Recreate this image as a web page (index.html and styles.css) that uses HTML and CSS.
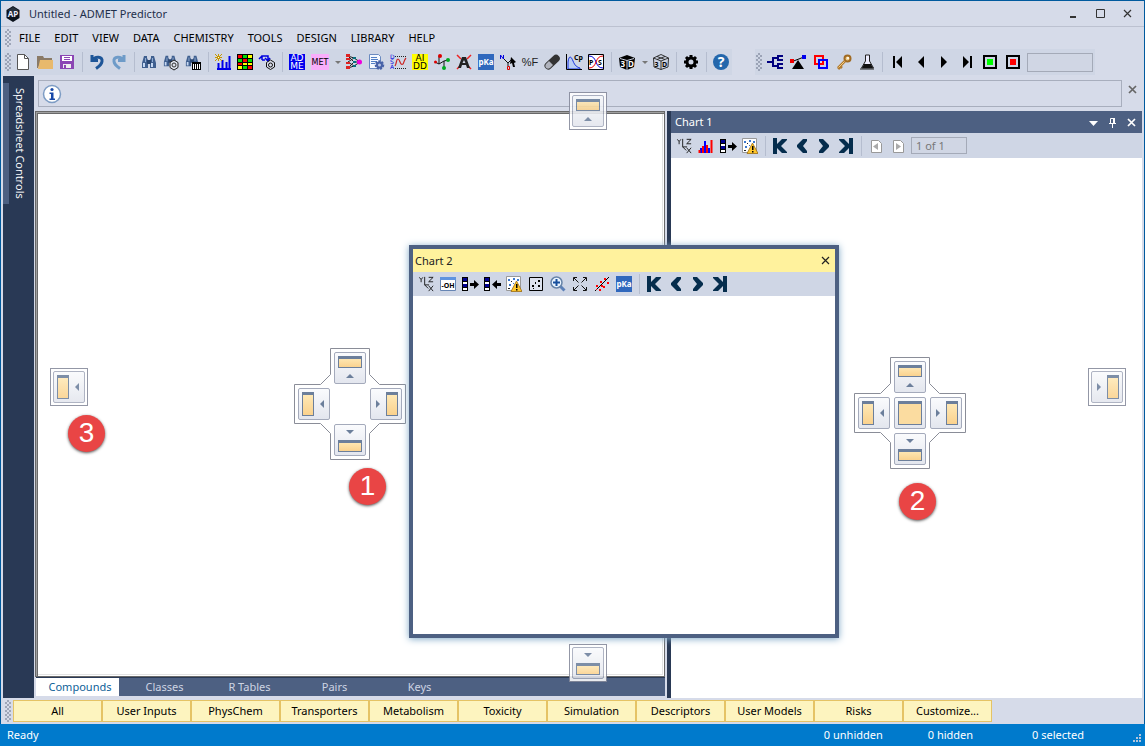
FILE: index.html
```html
<!DOCTYPE html>
<html lang="en">
<head>
<meta charset="utf-8">
<title>Untitled - ADMET Predictor</title>
<link rel="stylesheet" href="styles.css">
</head>
<body>
<svg class="sprites" aria-hidden="true">
  <linearGradient id="amber" x1="0" y1="0" x2="0" y2="1"><stop offset="0" stop-color="#ffeab8"/><stop offset="1" stop-color="#fad18c"/></linearGradient>
  <symbol id="dock-top" viewBox="0 0 32 32"><rect x="4.500" y="5.500" width="23" height="10" fill="url(#amber)" stroke="#6c7f9b"/><path d="M4 4h24v3H4z" fill="#6c7f9b"/><path d="M12 26l4-4 4 4z" fill="#6c7f9b"/></symbol>
  <symbol id="dock-bottom" viewBox="0 0 32 32"><rect x="4.500" y="17.500" width="23" height="10" fill="url(#amber)" stroke="#6c7f9b"/><path d="M4 16h24v3H4z" fill="#6c7f9b"/><path d="M12 6l4 4 4-4z" fill="#6c7f9b"/></symbol>
  <symbol id="dock-left" viewBox="0 0 32 32"><rect x="4.500" y="5.500" width="11" height="22" fill="url(#amber)" stroke="#6c7f9b"/><path d="M4 4h12v3H4z" fill="#6c7f9b"/><path d="M26 12l-4 4 4 4z" fill="#6c7f9b"/></symbol>
  <symbol id="dock-right" viewBox="0 0 32 32"><rect x="16.500" y="5.500" width="11" height="22" fill="url(#amber)" stroke="#6c7f9b"/><path d="M16 4h12v3H16z" fill="#6c7f9b"/><path d="M6 12l4 4-4 4z" fill="#6c7f9b"/></symbol>
  <symbol id="dock-center" viewBox="0 0 32 32"><rect x="4.500" y="5.500" width="23" height="22" fill="#fbdca0" stroke="#6c7f9b"/><path d="M4 4h24v3H4z" fill="#6c7f9b"/></symbol>
  <symbol id="dock-frame" viewBox="0 0 112 112"><path d="M36.500.5h39v26l10 10h26v39h-26l-10 10v26h-39v-26l-10-10h-26v-39h26l10-10z" fill="#fff" stroke="#8a8d98"/></symbol>
  <symbol id="binoculars" viewBox="0 0 16 16"><path d="M3 2h3v2l1 2v8H1V9zM10 2h3l2 7v5H9V6l1-2z" fill="#3f5f8f"/><path d="M6 6h4v4H6z" fill="#29456f"/><path d="M2 9h2v4H2zM10 9h2v4h-2z" fill="#c5d8f3"/><path d="M4 4h1v4H4zM11 4h1v4h-1z" fill="#8fabd2"/></symbol>
  <symbol id="xyz" viewBox="0 0 18 18"><path d="M1.500 1.500l2 2.500 2-2.500M3.500 4v3M7.500 1v9h5M7.500 10l4 4M12 1.500h5l-5 5h5M12 11l5 6M17 11l-5 6" fill="none" stroke="#111"/></symbol>
  <symbol id="strip-out" viewBox="0 0 18 16"><path d="M1 1h6v14H1z"/><path d="M2 2h4v3H2zM2 8h4v3H2z" fill="#000090"/><path d="M2 6h4v2H2zM2 12h4v2H2z" fill="#fff"/><path d="M9 7h4V4l5 4.500-5 4.500v-3H9z"/></symbol>
  <symbol id="strip-in" viewBox="0 0 18 16"><path d="M1 1h6v14H1z"/><path d="M2 2h4v3H2zM2 8h4v3H2z" fill="#000090"/><path d="M2 6h4v2H2zM2 12h4v2H2z" fill="#fff"/><path d="M18 7h-4V4L9 8.500l5 4.500v-3h4z"/></symbol>
  <symbol id="scatter-warn" viewBox="0 0 16 16"><path d="M.5.5h14v14H.5z" fill="#fff" stroke="#999"/><path d="M2 3h2v2H2zM7 2h2v2H7zM11 3h2v2h-2zM3 8h2v2H3zM7 7h1v1H7z" fill="#3b78cf"/><path d="M5 5h1v1H5zM2 12h2v1H2z" fill="#222"/><path d="M10.500 5L5 15.500h11z" fill="#ffc62a" stroke="#9b6c13" stroke-width=".8"/><path d="M10 8h1.500v4H10zM10 13h1.500v1.500H10z"/></symbol>
  <symbol id="pka" viewBox="0 0 16 16"><path d="M0 0h16v16H0z" fill="#3068bd"/><text x="8" y="11" text-anchor="middle" fill="#fff" font-size="8" font-weight="700">pKa</text></symbol>
  <symbol id="nav-first" viewBox="0 0 16 16"><path d="M1 0h4v6l5-5h5v1L9 8l6 6v1h-5l-5-5v6H1z"/></symbol>
  <symbol id="nav-last" viewBox="0 0 16 16"><path d="M15 0h-4v6L6 1H1v1l6 6-6 6v1h5l5-5v6h4z"/></symbol>
  <symbol id="nav-prev" viewBox="0 0 16 16"><path d="M9 1h4v2L9 8l4 5v2H9L3 9V7z"/></symbol>
  <symbol id="nav-next" viewBox="0 0 16 16"><path d="M7 1H3v2l4 5-4 5v2h4l6-6V7z"/></symbol>
</svg>
<div class="app">
  <header class="titlebar">
    <svg class="logo" viewBox="0 0 16 16" aria-hidden="true"><path d="M8 0l6.500 4v8L8 16l-6.500-4V4z" fill="#0b121c"/><path d="M8 1l5.500 3.300L8 8 2.500 4.300z" fill="#27313d"/><text x="8" y="11" text-anchor="middle" font-size="8" font-weight="700" fill="#eef">AP</text></svg>
    <h1 class="caption">Untitled - ADMET Predictor</h1>
    <button class="win" aria-label="Minimize"><svg viewBox="0 0 11 11"><path d="M2 8h6v2H2z"/></svg></button>
    <button class="win" aria-label="Maximize"><svg viewBox="0 0 11 11"><path d="M1.500 1.500h8v8h-8z" fill="none" stroke="currentColor"/></svg></button>
    <button class="win" aria-label="Close"><svg viewBox="0 0 11 11"><path d="M2 2l7 7M9 2l-7 7" fill="none" stroke="currentColor" stroke-width="1.200"/></svg></button>
  </header>
  <nav class="menubar" aria-label="Main menu">
    <span class="grip"></span>
    <button>FILE</button><button>EDIT</button><button>VIEW</button><button>DATA</button><button>CHEMISTRY</button><button>TOOLS</button><button>DESIGN</button><button>LIBRARY</button><button>HELP</button>
  </nav>
  <div class="toolbars">
    <div class="toolbar" role="toolbar" aria-label="Standard">
      <span class="grip"></span>
      <button class="tool" aria-label="New"><svg viewBox="0 0 16 16"><path d="M2.500.5h7l4 4v11h-11z" fill="#fff" stroke="#555"/><path d="M9.500.5v4h4" fill="none" stroke="#555"/></svg></button>
      <button class="tool" aria-label="Open"><svg viewBox="0 0 16 16"><path d="M0 2h6l1 2h8v3H4L1 14H0z" fill="#8a7a66"/><path d="M3 6h13v9H1z" fill="#e8b96c"/></svg></button>
      <button class="tool" aria-label="Save"><svg viewBox="0 0 16 16"><path d="M1 1h14v14H1z" fill="#8b46b4"/><path d="M3 2h10v5H3z" fill="#fff"/><path d="M5 3.500h6M5 5.500h6" stroke="#8b46b4"/><path d="M4 10h8v4H4z" fill="#eee"/><path d="M5 11h2v3H5z" fill="#8b46b4"/></svg></button>
      <span class="sep"></span>
      <button class="tool" aria-label="Undo"><svg viewBox="0 0 16 16"><path d="M3 1v5.500h6M3.500 6C6 2 14 2 13 7.500c-.5 3.500-3 5-6 7" fill="none" stroke="#1d5598" stroke-width="3"/></svg></button>
      <button class="tool" aria-label="Redo"><svg viewBox="0 0 16 16"><path d="M13 1v5.500H7M12.500 6C10 2 2 2 3 7.500c.5 3.500 3 5 6 7" fill="none" stroke="#6e9bc8" stroke-width="3"/></svg></button>
      <span class="sep"></span>
      <button class="tool" aria-label="Find"><svg><use href="#binoculars"/></svg></button>
      <button class="tool" aria-label="Find structure"><svg viewBox="0 0 16 16"><use href="#binoculars" width="14" height="14"/><path d="M11 6l4 2.500v5L11 16l-4-2.500v-5z" fill="#dde2ec" stroke="#222"/><circle cx="11" cy="11" r="2" fill="none" stroke="#333"/></svg></button>
      <button class="tool" aria-label="Find in table"><svg viewBox="0 0 16 16"><use href="#binoculars" width="14" height="14"/><path d="M7 8h9v8H7z"/><path d="M8.500 10v5M10.500 10v5M12.500 10v5M14.500 10v5" stroke="#fff"/></svg></button>
      <span class="sep"></span>
      <button class="tool" aria-label="New chart"><svg viewBox="0 0 16 16"><path d="M2 15h14M3.500 9v6M7.500 6v9M11.500 8v7M14.500 2v13" fill="none" stroke="#0000e8" stroke-width="2"/><path d="M0 0l7 7M7 0L0 7M3.500 0v7M0 3.500h7" stroke="#c89800"/><path d="M3 3h1v1H3z" fill="#fff"/></svg></button>
      <button class="tool" aria-label="Heat map"><svg viewBox="0 0 16 16"><path d="M0 0h16v16H0z"/><path d="M1 1h4v3H1zM6 5h4v3H6zM1 9h4v2H1zM11 12h4v3h-4z" fill="red"/><path d="M6 1h4v3H6zM1 5h4v3H1zM11 5h4v3h-4zM6 12h4v3H6z" fill="#0d0"/><path d="M11 1h4v3h-4zM6 9h4v2H6zM11 9h4v2h-4zM1 12h4v3H1z" fill="#ff0"/></svg></button>
      <button class="tool" aria-label="Convert structure"><svg viewBox="0 0 16 16"><path d="M3 6V2h6v4M0 5l3-3M6 4l3 3 2-3M3 6h3" fill="none" stroke="#0000e0" stroke-width="1.500"/><path d="M11.500 6l4 2.500v4.500l-4 2.500-4-2.500V8.500z" fill="#d8dcea" stroke="#111"/><circle cx="11.500" cy="11" r="2" fill="none" stroke="#111"/></svg></button>
      <span class="sep"></span>
      <button class="tool" aria-label="ADME"><svg viewBox="0 0 16 16"><path d="M0 0h16v16H0z" fill="#00e"/><g class="pixel" fill="#fff" font-size="9"><text x="8" y="7" text-anchor="middle">AD</text><text x="8" y="15" text-anchor="middle">ME</text></g></svg></button>
      <button class="tool tool-wide" aria-label="MET"><svg class="wide" viewBox="0 0 18 16"><path d="M0 0h18v16H0z" fill="#f9aefb"/><text class="pixel" x="9" y="11" text-anchor="middle" font-size="8">MET</text></svg></button>
      <button class="drop" aria-label="MET options"></button>
      <button class="tool" aria-label="Neural network"><svg viewBox="0 0 16 16"><path d="M2 2l6 2-6 4 6 4-6 2M2 2l6 6-6 6M8 4l6 4-6 4M8 8h6" fill="none" stroke="#222"/><path d="M0 0h4v3H0zM0 4h4v2H0zM0 8h4v2H0zM0 12h4v3H0z" fill="#d22"/><path d="M7 3h3v2H7zM7 7h3v2H7zM7 11h3v2H7z" fill="#087080"/><circle cx="13.500" cy="8" r="2.500" fill="#e0d"/></svg></button>
      <button class="tool" aria-label="Model settings"><svg viewBox="0 0 16 16"><path d="M1.500.5h9l2 2v12h-11z" fill="#f5f9ff" stroke="#6a8ac0"/><path d="M3 3.500h6M3 5.500h7M3 7.500h6M3 9.500h4" stroke="#527fc5"/><circle cx="11.500" cy="11" r="3.500" fill="#b9c6e5" stroke="#4762a8" stroke-width="2.500" stroke-dasharray="2 1"/><circle cx="11.500" cy="11" r="2.500" fill="none" stroke="#4762a8" stroke-width="2"/></svg></button>
      <button class="tool" aria-label="DSA"><svg viewBox="0 0 16 16"><g class="pixel" font-size="6" fill="#00d"><text x="0" y="5">D</text><text x="0" y="10">S</text><text x="0" y="15">A</text></g><path d="M5 12C7 9 6 5 8 5s2 7 5 5c1-1 1-4 3-6" fill="none" stroke="#c22" stroke-width="1.200"/><path d="M5 2.500h11M5 14.500h11" stroke="#222" stroke-dasharray="1 1"/></svg></button>
      <button class="tool" aria-label="AIDD"><svg viewBox="0 0 16 16"><path d="M0 0h16v16H0z" fill="#ff0"/><g class="pixel" font-size="9"><text x="8" y="7" text-anchor="middle">AI</text><text x="8" y="15" text-anchor="middle">DD</text></g></svg></button>
      <button class="tool" aria-label="Molecule"><svg viewBox="0 0 16 16"><path d="M1 8l4 2 5-3 4-1M5 2v8M10 7v7" fill="none" stroke="#111"/><circle cx="1.500" cy="8" r="1.500" fill="#d00"/><circle cx="6" cy="2" r="2" fill="#d00"/><circle cx="14" cy="6" r="2" fill="#0a2"/><circle cx="10" cy="14" r="2" fill="#0a2"/></svg></button>
      <button class="tool" aria-label="Atom model"><svg viewBox="0 0 16 16"><path d="M1 1l4 4M15 1l-4 4M1 15l3-3M15 15l-3-3" stroke="#e22" stroke-width="1.500"/><path d="M6 3h4l4 11h-3l-1-3H6l-1 3H2zM8 6L6.500 9h3z" fill="#222" fill-rule="evenodd"/></svg></button>
      <button class="tool" aria-label="pKa"><svg><use href="#pka"/></svg></button>
      <button class="tool" aria-label="Pick atom"><svg viewBox="0 0 16 16"><path d="M.5 5V1l3 4V1" fill="none" stroke="#00d"/><path d="M4 5l4 4 4-4M8 9v3" fill="none" stroke="#111"/><path d="M7.500 12.500h2v3h-2z" fill="none" stroke="#d00"/><path d="M11 3l5 5-2 1 1 4h-2l-1-4-2 1z"/></svg></button>
      <button class="tool percent">%F</button>
      <button class="tool" aria-label="Capsule"><svg viewBox="0 0 16 16"><rect x="-1" y="4.500" width="18" height="7.500" rx="3.700" transform="rotate(-43 8 8)" fill="#333"/><path d="M2 10l3-3 4 4-3 3c-3 2-6-1-4-4z" fill="#b0b3bd"/></svg></button>
      <button class="tool" aria-label="Cp plot"><svg viewBox="0 0 16 16"><path d="M2 15V8c1-7 3-6 5-1s4 6 7 7v1z" fill="#b9ccf3" stroke="#1732df"/><path d="M.5 0v15.500H16" fill="none" stroke="#000"/><text x="8" y="6" font-size="7" font-weight="700">Cp</text></svg></button>
      <button class="tool" aria-label="P/S plot"><svg viewBox="0 0 16 16"><path d="M.5.5h15v15H.5z" fill="#fff" stroke="#000"/><path d="M1 2c9 0 5 12 14 12" fill="none" stroke="#00d"/><path d="M1 14c9 0 5-12 14-12" fill="none" stroke="#e00"/><text x="1" y="11" font-size="7" font-weight="700">P</text><text x="10" y="11" font-size="7" font-weight="700">S</text></svg></button>
      <span class="sep"></span>
      <button class="tool tool-wide" aria-label="3D view"><svg viewBox="0 0 16 16"><path d="M0 4l8-3 8 3-1 9-7 3-7-3z"/><path d="M1 4.500l7 2 7-2M8 6.500V16" fill="none" stroke="#ccd3e2"/><text x="1.500" y="12.500" font-size="8" font-weight="700" fill="#fff">3</text><text x="9" y="12.500" font-size="8" font-weight="700" fill="#fff">D</text></svg></button>
      <button class="drop" aria-label="3D options"></button>
      <button class="tool" aria-label="3D wire view"><svg viewBox="0 0 16 16"><path d="M.5 4L8 .5 15.500 4 15 13l-7 2.500L1 13zM.5 4L8 7l7.500-3M8 7v8.500M4 2.500l8 3M12 2.500l-8 3" fill="#ccd3e2" stroke="#222" stroke-width=".9"/><text x="1.500" y="12.500" font-size="7" font-weight="700">3</text><text x="9" y="12.500" font-size="7" font-weight="700">D</text></svg></button>
      <span class="sep"></span>
      <button class="tool" aria-label="Settings"><svg viewBox="0 0 16 16"><circle cx="8" cy="8" r="4" fill="none" stroke="#000" stroke-width="3"/><path d="M8 1v3M8 12v3M1 8h3M12 8h3M3 3l2 2M11 11l2 2M13 3l-2 2M5 11l-2 2" stroke="#000" stroke-width="3"/></svg></button>
      <span class="sep"></span>
      <button class="tool" aria-label="Help"><svg viewBox="0 0 16 16"><circle cx="8" cy="8" r="8" fill="#2467ac"/><text x="8" y="13" text-anchor="middle" font-size="14" font-weight="700" fill="#fff">?</text></svg></button>
    </div>
    <div class="toolbar toolbar-nav" role="toolbar" aria-label="Navigation">
      <span class="grip"></span>
      <button class="tool" aria-label="Tree"><svg viewBox="0 0 16 16"><path d="M0 8h6M16 2h-5v4h5M11 4H6v8h5M16 10h-5v4h5" fill="none" stroke="#000080" stroke-width="2"/></svg></button>
      <button class="tool" aria-label="Balance"><svg viewBox="0 0 16 16"><path d="M1 8l13-5" stroke="#000"/><path d="M8 6l6 9H2z"/><path d="M0 5h4v4H0z" fill="#e00"/><path d="M12 1h4v4h-4z" fill="#00e"/></svg></button>
      <button class="tool" aria-label="Overlap"><svg viewBox="0 0 16 16"><path d="M2 2h8v8H2z" fill="none" stroke="red" stroke-width="2"/><path d="M6 6h8v8H6z" fill="none" stroke="#00f" stroke-width="2"/></svg></button>
      <button class="tool" aria-label="Key"><svg viewBox="0 0 16 16"><circle cx="11.500" cy="4.500" r="3" fill="#f2cf8a" stroke="#a06a22" stroke-width="2"/><path d="M9 7l-7 7M4 12l2 2M2 13l2 2" fill="none" stroke="#b27a2d" stroke-width="2.500"/><path d="M8.500 7.500l-6 6" stroke="#f1cc85"/><circle cx="12" cy="4" r="1" fill="#fff"/></svg></button>
      <button class="tool" aria-label="Flask"><svg viewBox="0 0 16 16"><path d="M6.500 1h4v6l4 7h-12l4-7z" fill="#eef" stroke="#222"/><path d="M5 10h7l2 4H3z" fill="#111"/><path d="M1 15h14" stroke="#222"/></svg></button>
      <span class="sep"></span>
      <button class="tool" aria-label="First"><svg viewBox="0 0 16 16"><path d="M3 2h2v12H3zM12 2v12L6 8z"/></svg></button>
      <button class="tool" aria-label="Previous"><svg viewBox="0 0 16 16"><path d="M11 2v12L5 8z"/></svg></button>
      <button class="tool" aria-label="Next"><svg viewBox="0 0 16 16"><path d="M5 2v12l6-6z"/></svg></button>
      <button class="tool" aria-label="Last"><svg viewBox="0 0 16 16"><path d="M4 2v12l6-6zM11 2h2v12h-2z"/></svg></button>
      <button class="tool" aria-label="Start"><svg viewBox="0 0 16 16"><path d="M2 2h12v12H2z" fill="none" stroke="#000" stroke-width="2"/><path d="M5 5h6v6H5z" fill="#0f0"/></svg></button>
      <button class="tool" aria-label="Stop"><svg viewBox="0 0 16 16"><path d="M2 2h12v12H2z" fill="none" stroke="#000" stroke-width="2"/><path d="M5 5h6v6H5z" fill="red"/></svg></button>
      <input class="field goto" aria-label="Go to record">
    </div>
  </div>
  <main class="workspace">
    <aside class="autohide"><button class="side-tab">Spreadsheet Controls</button></aside>
    <div class="stage">
      <div class="infobar">
        <div class="message"><svg class="info" viewBox="0 0 20 20" role="img" aria-label="Information"><circle cx="10" cy="10" r="8.500" fill="#fff" stroke="#7d9cc4" stroke-width="1.500"/><circle cx="10" cy="5.500" r="1.600" fill="#1748a8"/><path d="M7.500 8.500h4v6H13V16H7.500v-1.500H9V10H7.500z" fill="#1748a8"/></svg></div>
        <button class="close-info" aria-label="Dismiss"><svg viewBox="0 0 11 11"><path d="M2 2l7 7M9 2l-7 7" stroke="currentColor" stroke-width="1.700"/></svg></button>
      </div>
      <div class="panes">
        <section class="document" aria-label="Spreadsheet">
          <div class="sheet"></div>
          <div class="tabs" role="tablist"><button role="tab" class="tab tab-on" aria-selected="true">Compounds</button><button role="tab" class="tab">Classes</button><button role="tab" class="tab">R Tables</button><button role="tab" class="tab">Pairs</button><button role="tab" class="tab">Keys</button></div>
          <div class="compass compass-doc">
            <svg class="frame"><use href="#dock-frame"/></svg>
            <button class="dock at-top" aria-label="Dock top"><svg><use href="#dock-top"/></svg></button>
            <button class="dock at-left" aria-label="Dock left"><svg><use href="#dock-left"/></svg></button>
            <button class="dock at-right" aria-label="Dock right"><svg><use href="#dock-right"/></svg></button>
            <button class="dock at-bottom" aria-label="Dock bottom"><svg><use href="#dock-bottom"/></svg></button>
          </div>
        </section>
        <section class="chart" aria-labelledby="chart1">
          <header class="chart-head"><h2 id="chart1">Chart 1</h2>
            <button aria-label="Window position"><svg viewBox="0 0 11 11"><path d="M1 4h9L5.500 9z"/></svg></button>
            <button aria-label="Auto hide"><svg viewBox="0 0 11 11"><path d="M3.500 6V1.500h4V6M2 6.500h7M5.500 7v4" fill="none" stroke="currentColor"/><path d="M6 1h2v5H6z"/></svg></button>
            <button aria-label="Close Chart 1"><svg viewBox="0 0 11 11"><path d="M2 2l7 7M9 2l-7 7" stroke="currentColor" stroke-width="1.700"/></svg></button>
          </header>
          <div class="chart-tools" role="toolbar" aria-label="Chart 1 tools">
            <button class="tool" aria-label="Axes"><svg class="wide"><use href="#xyz"/></svg></button>
            <button class="tool" aria-label="Histogram"><svg viewBox="0 0 16 16"><path d="M3 10v5M7 3v12M11 10v5" stroke="#00f" stroke-width="2"/><path d="M5 8v7M9 7v8M13.500 2v13M1.500 12v3" stroke="#f00" stroke-width="2"/></svg></button>
            <button class="tool" aria-label="Export column"><svg class="wide"><use href="#strip-out"/></svg></button>
            <button class="tool" aria-label="Outliers"><svg><use href="#scatter-warn"/></svg></button>
            <span class="sep"></span>
            <button class="tool navy" aria-label="First"><svg><use href="#nav-first"/></svg></button>
            <button class="tool navy" aria-label="Previous"><svg><use href="#nav-prev"/></svg></button>
            <button class="tool navy" aria-label="Next"><svg><use href="#nav-next"/></svg></button>
            <button class="tool navy" aria-label="Last"><svg><use href="#nav-last"/></svg></button>
            <span class="sep"></span>
            <button class="tool" aria-label="Previous page"><svg viewBox="0 0 16 16"><path d="M3.500 2.500h7l3 3v9h-10z" fill="#fff" stroke="#999"/><path d="M10 5v7L5 8.500z" fill="#aaa"/></svg></button>
            <button class="tool" aria-label="Next page"><svg viewBox="0 0 16 16"><path d="M3.500 2.500h7l3 3v9h-10z" fill="#fff" stroke="#999"/><path d="M6 5v7l5-3.500z" fill="#aaa"/></svg></button>
            <input class="field page" aria-label="Page" value="1 of 1" disabled>
          </div>
          <div class="plot"></div>
          <div class="compass compass-chart">
            <svg class="frame"><use href="#dock-frame"/></svg>
            <button class="dock at-top" aria-label="Dock top"><svg><use href="#dock-top"/></svg></button>
            <button class="dock at-left" aria-label="Dock left"><svg><use href="#dock-left"/></svg></button>
            <button class="dock at-center" aria-label="Dock as tab"><svg><use href="#dock-center"/></svg></button>
            <button class="dock at-right" aria-label="Dock right"><svg><use href="#dock-right"/></svg></button>
            <button class="dock at-bottom" aria-label="Dock bottom"><svg><use href="#dock-bottom"/></svg></button>
          </div>
        </section>
      </div>
      <section class="floating" aria-labelledby="chart2">
        <header class="float-head"><h2 id="chart2">Chart 2</h2><button aria-label="Close Chart 2"><svg viewBox="0 0 11 11"><path d="M2 2l7 7M9 2l-7 7" stroke="currentColor" stroke-width="1.200"/></svg></button></header>
        <div class="chart-tools" role="toolbar" aria-label="Chart 2 tools">
          <button class="tool" aria-label="Axes"><svg class="wide"><use href="#xyz"/></svg></button>
          <button class="tool" aria-label="Structure label"><svg viewBox="0 0 16 16"><path d="M.5 1.500h15v13H.5z" fill="#fff" stroke="#6685b4"/><path d="M0 1h16v3H0z" fill="#5f93df"/><text x="8" y="12" text-anchor="middle" font-size="7" font-weight="700">-OH</text></svg></button>
          <button class="tool" aria-label="Export column"><svg class="wide"><use href="#strip-out"/></svg></button>
          <button class="tool" aria-label="Import column"><svg class="wide"><use href="#strip-in"/></svg></button>
          <button class="tool" aria-label="Outliers"><svg><use href="#scatter-warn"/></svg></button>
          <button class="tool" aria-label="Scatter"><svg viewBox="0 0 16 16"><path d="M1.500 1.500h13v13h-13z" fill="#dce1ee" stroke="#000"/><path d="M4 9h2v2H4zM7 6h1v2H7zM10 4h2v2h-2zM10 9h2v2h-2zM5 12h1v1H5z"/></svg></button>
          <button class="tool" aria-label="Zoom in"><svg viewBox="0 0 16 16"><path d="M10 10l4.500 4.500" stroke="#5c80b8" stroke-width="3"/><circle cx="6.500" cy="6.500" r="5.500" fill="#eaf4ff" stroke="#6683a8" stroke-width="1.500"/><path d="M3 6.500h7M6.500 3v7" stroke="#174f9d" stroke-width="2"/></svg></button>
          <button class="tool" aria-label="Fit"><svg viewBox="0 0 16 16"><path d="M1.500 5V1.500H5M11 1.500h3.500V5M14.500 11v3.500H11M5 14.500H1.500V11M2 2l4.500 4.500M14 2L9.500 6.500M2 14l4.500-4.500M14 14L9.500 9.500" fill="none" stroke="#111"/></svg></button>
          <button class="tool" aria-label="Regression"><svg viewBox="0 0 16 16"><path d="M1 15L15 1" stroke="#000"/><path d="M2 9h2v2H2zM6 5h2v2H6zM10 2h2v2h-2zM5 13h2v2H5zM9 10h2v2H9zM13 6h2v2h-2zM7 9h2v2H7zM2 13h1v1H2z" fill="red"/></svg></button>
          <button class="tool" aria-label="pKa"><svg><use href="#pka"/></svg></button>
          <span class="sep"></span>
          <button class="tool navy" aria-label="First"><svg><use href="#nav-first"/></svg></button>
          <button class="tool navy" aria-label="Previous"><svg><use href="#nav-prev"/></svg></button>
          <button class="tool navy" aria-label="Next"><svg><use href="#nav-next"/></svg></button>
          <button class="tool navy" aria-label="Last"><svg><use href="#nav-last"/></svg></button>
        </div>
        <div class="plot"></div>
      </section>
      <div class="edge edge-top"><button class="dock" aria-label="Dock to top edge"><svg><use href="#dock-top"/></svg></button></div>
      <div class="edge edge-left"><button class="dock" aria-label="Dock to left edge"><svg><use href="#dock-left"/></svg></button></div>
      <div class="edge edge-right"><button class="dock" aria-label="Dock to right edge"><svg><use href="#dock-right"/></svg></button></div>
      <div class="edge edge-bottom"><button class="dock" aria-label="Dock to bottom edge"><svg><use href="#dock-bottom"/></svg></button></div>
      <span class="badge badge-1">1</span>
      <span class="badge badge-2">2</span>
      <span class="badge badge-3">3</span>
    </div>
  </main>
  <nav class="categories" aria-label="Property groups">
    <span class="grip"></span>
    <button>All</button><button>User Inputs</button><button>PhysChem</button><button>Transporters</button><button>Metabolism</button><button>Toxicity</button><button>Simulation</button><button>Descriptors</button><button>User Models</button><button>Risks</button><button>Customize...</button>
  </nav>
  <footer class="status">
    <span class="ready">Ready</span><span class="count">0 unhidden</span><span class="count">0 hidden</span><span class="count">0 selected</span>
    <svg class="sizer" viewBox="0 0 9 9" aria-hidden="true"><path d="M7 1h2v2H7zM4 4h2v2H4zM7 4h2v2H7zM1 7h2v2H1zM4 7h2v2H4zM7 7h2v2H7z" fill="#b5c6dc"/></svg>
  </footer>
</div>
</body>
</html>
```
FILE: styles.css
```css
* { box-sizing: border-box; }
body {
  margin: 0;
  font: 11px/16px "Noto Sans", "Open Sans", sans-serif;
  color: #000;
}
button, input { font: inherit; color: inherit; }
button { margin: 0; padding: 0; border: 0; background: none; }
h1, h2 { margin: 0; font-size: inherit; font-weight: 400; }
svg { display: block; fill: currentColor; }
.sprites { position: absolute; width: 0; height: 0; }
.pixel { font-family: "DejaVu Sans", sans-serif; }

.app {
  display: flex;
  flex-direction: column;
  height: 100vh;
  background: #d6dbe9;
  border: solid #005a9e;
  border-width: 1px 1px 0;
}

/* Title, menu and main toolbars */
.titlebar {
  display: flex;
  align-items: center;
  height: 26px;
  padding: 0 3px 0 4px;
  border-bottom: 1px solid #bcc1d0;
  color: #1e2f4b;
}
.logo { width: 16px; height: 16px; margin-right: 8px; }
.caption { flex: 1; }
.win { display: grid; place-items: center; width: 27px; height: 24px; color: #333; }
.win svg { width: 11px; height: 11px; }
.menubar { display: flex; align-items: center; height: 22px; padding-left: 4px; }
.menubar button { padding: 0 7px; }
.grip {
  flex: none;
  width: 6px;
  height: 18px;
  margin-right: 1px;
  background: conic-gradient(#667086 25%, transparent 0) 0 0 / 2px 2px;
  background:
    linear-gradient(#667086, #667086) 0 0 / 0 0 no-repeat,
    repeating-conic-gradient(#667086 0 25%, transparent 0 50%) 0 0 / 4px 4px;
  opacity: .5;
}
.toolbars { display: flex; gap: 23px; height: 27px; padding: 0 0 1px 3px; }
.toolbar { display: flex; align-items: center; background: #cfd6e5; padding-left: 1px; }
.tool {
  flex: none;
  display: grid;
  place-items: center;
  width: 22px;
  height: 22px;
}
.tool svg { width: 16px; height: 16px; overflow: visible; }
.tool svg.wide { width: 18px; }
.tool-wide { width: 24px; }
.toolbar-nav .tool { width: 23px; }
.toolbar-nav { padding-right: 2px; }
.drop { width: 11px; height: 22px; display: grid; place-items: center; }
.drop::after { content: ""; border: solid transparent; border-width: 3px 3px 0; border-top-color: #777; }
.sep { flex: none; width: 8px; height: 20px; background: linear-gradient(#b5bdcf, #b5bdcf) 4px 0 / 1px 100% no-repeat; }
.percent { font-family: "Liberation Sans", sans-serif; font-size: 11px; color: #222; }
.field { border: 1px solid #a4aab8; border-radius: 0; background: #d0d6e4; padding: 0 4px; }
.goto { width: 66px; height: 19px; margin-left: 3px; }
.page { width: 56px; height: 17px; margin-left: 2px; color: #777; }

/* Work area */
.workspace { flex: 1; min-height: 0; display: flex; padding: 0 2px; }
.autohide { width: 31px; padding-top: 7px; background: #293955; }
.side-tab {
  display: block;
  border-left: 6px solid #4d6082;
  width: 27px;
  height: 121px;
  writing-mode: vertical-rl;
  font: 11px/20px "Open Sans", "Noto Sans", sans-serif;
  white-space: nowrap;
  color: #fff;
}
.stage { position: relative; flex: 1; min-width: 0; display: flex; flex-direction: column; }
.infobar { display: flex; height: 35px; padding: 4px 0 4px 4px; }
.message { flex: 1; display: flex; align-items: center; border: 1px solid #a8aebd; padding-left: 3px; }
.info { width: 20px; height: 20px; }
.close-info { width: 20px; height: 18px; display: grid; place-items: center; color: #666; }
.close-info svg { width: 11px; height: 11px; }
.panes { flex: 1; min-height: 0; display: grid; grid-template-columns: 631fr 477fr; }
.document { position: relative; display: flex; flex-direction: column; margin: 0 0 2px 1px; min-width: 0; }
.sheet {
  flex: 1;
  background: #fff;
  border: 1px solid #696969;
  box-shadow:
    inset 1px 1px #a0a0a0,
    inset 2px 2px #696969,
    inset -1px -1px #fff,
    inset -2px -2px #e3e3e3;
}
.tabs { display: flex; height: 19px; margin-left: 1px; border-top: 1px solid #293955; background: #4d6082; }
.tab { width: 85px; line-height: 18px; color: #ced4e3; }
.tab-on { width: 83px; margin-right: 3px; padding-left: 5px; background: #fff; color: #0e6198; }
.chart {
  position: relative;
  display: flex;
  flex-direction: column;
  min-width: 0;
  margin-left: 2px;
  border-left: 4px solid #293955;
}
.chart-head { display: flex; align-items: center; height: 22px; padding: 0 1px 0 4px; background: #4d6082; color: #fff; }
.chart-head h2, .float-head h2 { flex: 1; }
.chart-head button { width: 19px; height: 19px; display: grid; place-items: center; }
.chart-head svg, .float-head svg { width: 11px; height: 11px; }
.chart-tools { display: flex; align-items: center; height: 25px; padding-left: 2px; background: #cfd6e5; }
.navy { color: #052d4d; }
.plot { flex: 1; background: #fff; }

/* Floating chart window */
.floating {
  position: absolute;
  left: 375px;
  top: 169px;
  width: 430px;
  height: 393px;
  display: flex;
  flex-direction: column;
  border: 4px solid #4d6082;
  box-shadow: 0 1px 7px #7fa9c8;
}
.float-head { display: flex; align-items: center; height: 23px; padding: 0 4px 0 2px; background: #fff29d; color: #222; }
.float-head button { display: grid; place-items: center; }
.floating .chart-tools { height: 24px; }

/* Docking guides */
.compass { position: absolute; width: 112px; height: 112px; }
.compass-doc { left: calc(50% - 56px); top: calc(50% - 56px); }
.compass-chart { left: 183px; top: 246px; }
.compass .frame { width: 112px; height: 112px; }
.dock {
  width: 32px;
  height: 32px;
  border: 1px solid #a4aabb;
  border-radius: 2px;
  background: linear-gradient(#fafbfd, #e3e6ee);
}
.dock svg { width: 32px; height: 32px; margin: -1px; }
.compass .dock { position: absolute; }
.at-top { left: 40px; top: 4px; }
.at-left { left: 4px; top: 40px; }
.at-center { left: 40px; top: 40px; }
.at-right { left: 76px; top: 40px; }
.at-bottom { left: 40px; top: 76px; }
.edge {
  position: absolute;
  display: grid;
  place-items: center;
  width: 38px;
  height: 38px;
  border: 1px solid #85899a;
  background: #fff;
  opacity: .88;
}
.edge-top { left: calc(50% - 19px); top: 16px; }
.edge-bottom { left: calc(50% - 19px); bottom: 16px; }
.edge-left { left: 16px; top: calc(50% - 19px); }
.edge-right { right: 16px; top: calc(50% - 19px); }
.badge {
  position: absolute;
  width: 37px;
  height: 37px;
  border-radius: 50%;
  background: #e94545;
  color: #fff;
  font: 28px/36px "Liberation Sans", sans-serif;
  text-align: center;
  box-shadow: 0 1px 3px #555;
}
.badge-1 { left: 315px; top: 392px; }
.badge-2 { left: 865px; top: 407px; }
.badge-3 { left: 34px; top: 339px; }

/* Bottom bars */
.categories { display: flex; align-items: center; height: 26px; padding-left: 4px; }
.categories .grip { height: 22px; margin-right: 2px; }
.categories button { width: 89px; height: 22px; border: 1px solid #e5c365; background: #fdf4bf; }
.status {
  position: relative;
  display: flex;
  align-items: center;
  gap: 45px;
  height: 22px;
  margin: 0 -1px;
  padding: 0 61px 0 7px;
  background: #007acc;
  color: #fff;
}
.ready { flex: 1; }
.count:last-of-type { margin-left: 14px; }
.sizer { position: absolute; right: 4px; bottom: 4px; width: 9px; height: 9px; }
```
